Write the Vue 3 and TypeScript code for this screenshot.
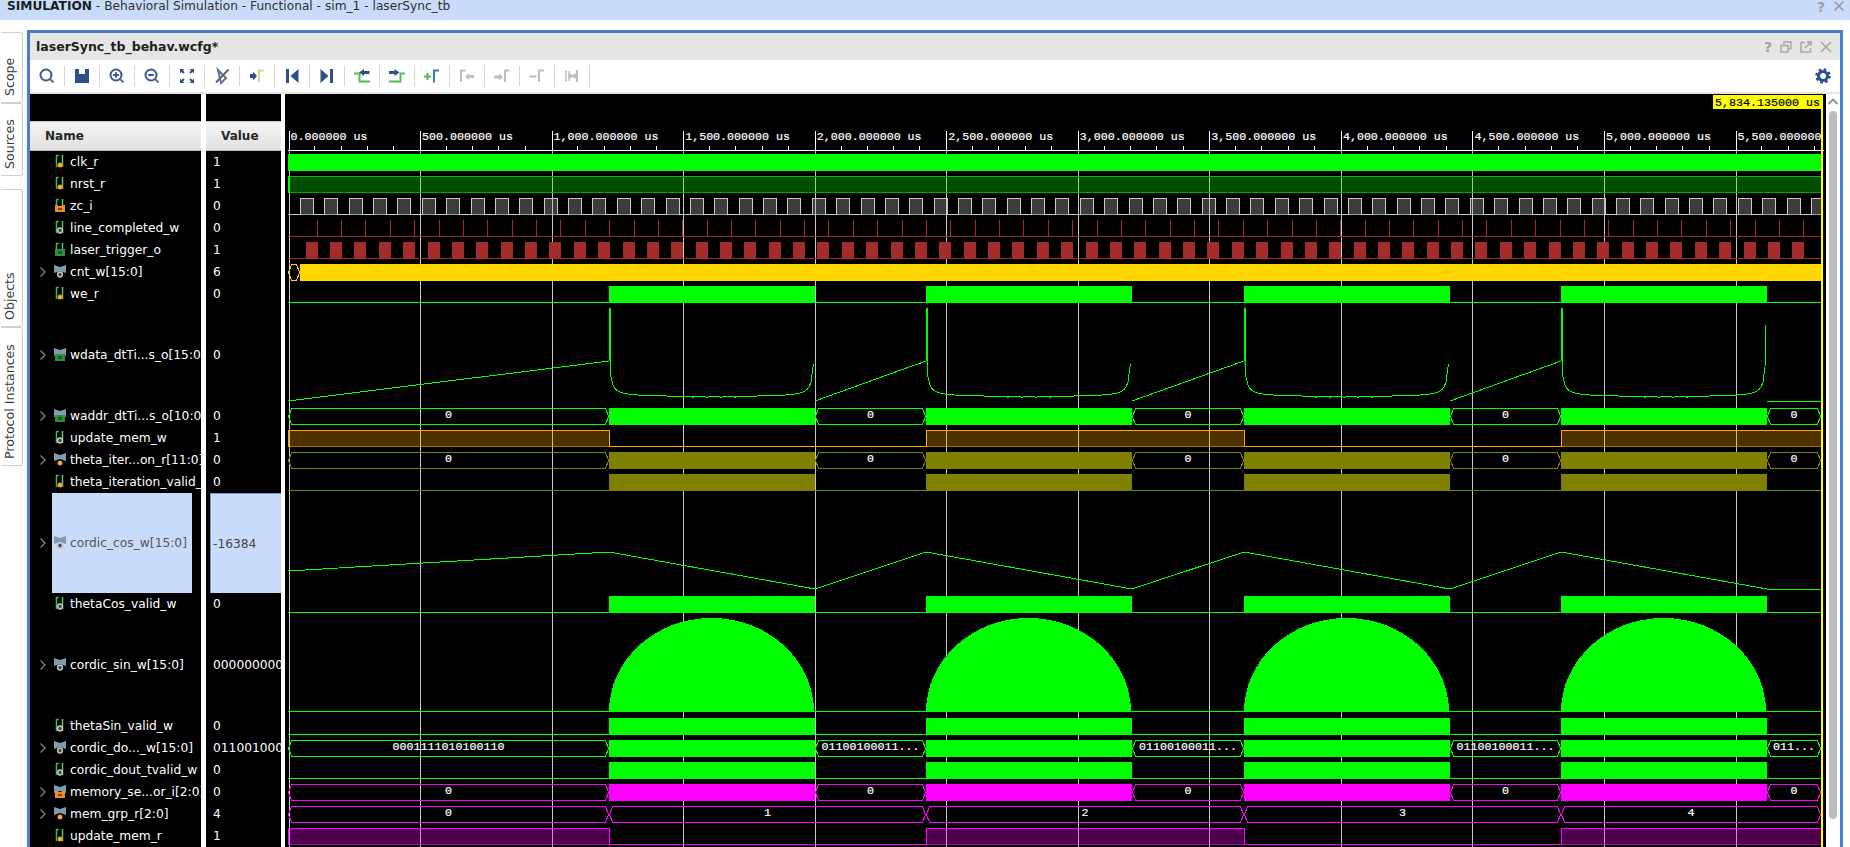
<script setup lang="ts">
type Row = {
  name: string;
  value: string;
  icon: "reg" | "in" | "wire" | "out";
  bus?: boolean;
  tall?: boolean;
  selected?: boolean;
};
type Shape = { d: string; fill?: string; stroke?: string; opacity?: number };
type Label = { x: number; y: number; text: string };

const rows: Row[] = [
  { name: "clk_r", value: "1", icon: "reg" },
  { name: "nrst_r", value: "1", icon: "reg" },
  { name: "zc_i", value: "0", icon: "in" },
  { name: "line_completed_w", value: "0", icon: "wire" },
  { name: "laser_trigger_o", value: "1", icon: "out" },
  { name: "cnt_w[15:0]", value: "6", icon: "wire", bus: true },
  { name: "we_r", value: "0", icon: "reg" },
  { name: "wdata_dtTi...s_o[15:0]", value: "0", icon: "out", bus: true, tall: true },
  { name: "waddr_dtTi...s_o[10:0]", value: "0", icon: "out", bus: true },
  { name: "update_mem_w", value: "1", icon: "wire" },
  { name: "theta_iter...on_r[11:0]", value: "0", icon: "reg", bus: true },
  { name: "theta_iteration_valid_w", value: "0", icon: "reg" },
  { name: "cordic_cos_w[15:0]", value: "-16384", icon: "wire", bus: true, tall: true, selected: true },
  { name: "thetaCos_valid_w", value: "0", icon: "wire" },
  { name: "cordic_sin_w[15:0]", value: "0000000000000000", icon: "wire", bus: true, tall: true },
  { name: "thetaSin_valid_w", value: "0", icon: "wire" },
  { name: "cordic_do..._w[15:0]", value: "0110010001100100", icon: "wire", bus: true },
  { name: "cordic_dout_tvalid_w", value: "0", icon: "wire" },
  { name: "memory_se...or_i[2:0]", value: "0", icon: "in", bus: true },
  { name: "mem_grp_r[2:0]", value: "4", icon: "reg", bus: true },
  { name: "update_mem_r", value: "1", icon: "reg" },
];

// wave area is drawn in page coordinates
const X0 = 288;
const X1 = 1821;
const MAJOR = 131.55;
const GREEN = "#00ff00";
const BRICK = "#a52a2a";
const OLIVE = "#808000";
const MAGENTA = "#ff00ff";
const ORANGE = "#ffa500";
const GOLD = "#ffd700";

const burst: [number, number][] = [
  [609, 815],
  [926, 1132],
  [1244, 1450],
  [1561, 1767],
];
const idle: [number, number][] = [
  [288, 609],
  [815, 926],
  [1132, 1244],
  [1450, 1561],
  [1767, 1821],
];
const toggled: [number, number][] = [
  [288, 609],
  [926, 1244],
  [1561, 1821],
];

const shapes: Shape[] = [];
const labels: Label[] = [];

function block(x0: number, x1: number, y0: number, y1: number) {
  return `M${x0} ${y0}H${x1}V${y1}H${x0}Z`;
}
function hex(x0: number, x1: number, t: number) {
  const top = t + 3.5;
  const bot = t + 19.5;
  const mid = t + 11.5;
  return `M${x0 + 0.5} ${mid}L${x0 + 3.5} ${top}H${x1 - 3.5}L${x1 - 0.5} ${mid}L${x1 - 3.5} ${bot}H${x0 + 3.5}Z`;
}
function valid(t: number, color: string) {
  shapes.push({ d: `M${X0} ${t + 19.5}H${X1}`, stroke: color });
  burst.forEach(([a, b]) => shapes.push({ d: block(a, b, t + 3, t + 20), fill: color }));
}
function busBursts(t: number, color: string, text: string[]) {
  burst.forEach(([a, b]) => shapes.push({ d: block(a, b, t + 3, t + 20), fill: color }));
  idle.forEach(([a, b], i) => {
    shapes.push({ d: hex(a, b, t), stroke: color });
    labels.push({ x: (a + b) / 2, y: t + 13, text: text[i] });
  });
}
function digital(t: number, highs: [number, number][], color: string, dim: number, fill = color) {
  const top = t + 3.5;
  const bot = t + 19.5;
  let d = `M${X0} ${bot}`;
  highs.forEach(([a, b]) => {
    shapes.push({ d: block(a, Math.min(b, X1), t + 3, t + 20), fill, opacity: 0.3 });
    shapes.push({ d: `M${a} ${bot}H${Math.min(b, X1)}`, stroke: color, opacity: dim });
    d += `M${a + 0.5} ${bot}V${top}H${Math.min(b, X1) + 0.5}`;
    d += b < X1 ? `V${bot}` : "";
  });
  shapes.push({ d, stroke: color });
  const lows: string[] = [];
  let from = X0;
  highs.forEach(([a, b]) => {
    if (a > from) lows.push(`M${from} ${bot}H${a}`);
    from = b;
  });
  if (from < X1) lows.push(`M${from} ${bot}H${X1}`);
  shapes.push({ d: lows.join(""), stroke: color });
}
function uShape(x0: number, x1: number, peak: number) {
  const floor = 397;
  const pts: string[] = [`M${x0} 361`, `L${x0} 308`, `L${x0 + 1} 308`, `L${x0 + 1} 364`];
  for (let x = x0 + 2; x <= x1; x += 2) {
    const d = Math.min(x - x0, x1 - x);
    let y = floor - 60 / (d + 1);
    if (d > 70 && x % 7 === 0) y += 1;
    pts.push(`L${x} ${y.toFixed(1)}`);
  }
  pts.push(`L${x1} ${peak}`);
  return pts.join("");
}

let top = 151;
const rowTops = rows.map((r) => {
  const t = top;
  top += r.tall ? 100 : 22;
  return t;
});

// each signal
shapes.push({ d: block(X0, X1, rowTops[0] + 3, rowTops[0] + 20), fill: GREEN });

digital(rowTops[1], [[X0, X1 + 1]], "#00c000", 0.8, GREEN);
shapes.push({ d: block(X0, X0 + 2, rowTops[1] + 3, rowTops[1] + 20), fill: GREEN });

const zcHighs: [number, number][] = [];
for (let k = 0; k < 63; k++) {
  const a = Math.round(300 + 24.37 * k);
  zcHighs.push([a, Math.min(a + 13, X1 + 1)]);
}
digital(rowTops[2], zcHighs, "#c8c8c8", 0.7);

shapes.push({ d: `M${X0} ${rowTops[3] + 19.5}H${X1}`, stroke: BRICK });
shapes.push({ d: `M${X0} ${rowTops[4] + 19.5}H${X1}`, stroke: BRICK });
for (let k = 0; k < 63; k++) {
  const e = Math.round(316.7 + 24.37 * k);
  if (e >= X1) break;
  shapes.push({ d: `M${e + 0.5} ${rowTops[3] + 3}V${rowTops[3] + 20}`, stroke: BRICK });
  shapes.push({ d: block(e - 11, Math.min(e + 1, X1), rowTops[4] + 3, rowTops[4] + 20), fill: BRICK });
}

shapes.push({ d: hex(X0, 300, rowTops[5]), stroke: GOLD });
shapes.push({ d: block(300, X1, rowTops[5] + 3, rowTops[5] + 20), fill: GOLD });

valid(rowTops[6], GREEN);

const ramp = `M288 401L609 361M815 401L926 361M1132 401L1244 361M1450 401L1561 361M1767 401H${X1}`;
shapes.push({
  d: ramp + uShape(609, 814, 364) + uShape(926, 1131, 364) + uShape(1244, 1449, 364) + uShape(1561, 1766, 325),
  stroke: GREEN,
});

const zeros = ["0", "0", "0", "0", "0"];
busBursts(rowTops[8], GREEN, zeros);
digital(rowTops[9], toggled, ORANGE, 0.55);
busBursts(rowTops[10], OLIVE, zeros);
valid(rowTops[11], OLIVE);

shapes.push({
  d: `M288 571L609 552L815 589L926 552L1132 589L1244 552L1450 589L1561 552L1767 589H${X1}`,
  stroke: GREEN,
});

valid(rowTops[13], GREEN);

shapes.push({ d: `M${X0} 711.5H${X1}`, stroke: GREEN });
burst.forEach(([a]) => {
  shapes.push({ d: `M${a} 712A102.5 94 0 0 1 ${a + 205} 712Z`, fill: GREEN });
});

valid(rowTops[15], GREEN);
busBursts(rowTops[16], GREEN, [
  "0001111010100110",
  "01100100011...",
  "01100100011...",
  "01100100011...",
  "011...",
]);
valid(rowTops[17], GREEN);
busBursts(rowTops[18], MAGENTA, zeros);

[
  [288, 609],
  [609, 926],
  [926, 1244],
  [1244, 1561],
  [1561, 1821],
].forEach(([a, b], i) => {
  shapes.push({ d: hex(a, b, rowTops[19]), stroke: MAGENTA });
  labels.push({ x: (a + b) / 2, y: rowTops[19] + 13, text: String(i) });
});
digital(rowTops[20], toggled, MAGENTA, 0.55);

// time ruler
const ruler = Array.from({ length: 12 }, (_, i) => {
  const us = i * 500;
  const txt = us >= 1000 ? `${Math.floor(us / 1000)},${String(us % 1000).padStart(3, "0")}` : String(us);
  return { x: X0 + 0.5 + i * MAJOR, text: `${txt}.000000 us` };
});
const minorTicks: number[] = [];
for (let i = 0; i < 12; i++) {
  for (let j = 1; j < 5; j++) {
    const x = Math.round(X0 + i * MAJOR + (j * MAJOR) / 5) + 0.5;
    if (x < X1) minorTicks.push(x);
  }
}

const NAVY = "#2f4f8a";
const LOUPE = "#3a5a90";
const GRAY = "#bdbdbd";
const LEAF = "#4cc04c";
const tools: Shape[][] = [
  [
    { d: "M9 3.5a5.5 5.5 0 1 0 0 11a5.5 5.5 0 1 0 0-11z", stroke: LOUPE },
    { d: "M13 13l3.5 3.5", stroke: "#5f6f8a" },
  ],
  [{ d: "M3 3h4v5h6V3h4v14H3z", fill: NAVY }],
  [
    { d: "M9 3.5a5.5 5.5 0 1 0 0 11a5.5 5.5 0 1 0 0-11z", stroke: LOUPE },
    { d: "M13 13l3.5 3.5", stroke: "#5f6f8a" },
    { d: "M6.2 9h5.6M9 6.2v5.6", stroke: LOUPE },
  ],
  [
    { d: "M9 3.5a5.5 5.5 0 1 0 0 11a5.5 5.5 0 1 0 0-11z", stroke: LOUPE },
    { d: "M13 13l3.5 3.5", stroke: "#5f6f8a" },
    { d: "M6.2 9h5.6", stroke: LOUPE },
  ],
  [
    { d: "M3 3h4.5L3 7.5zM17 3h-4.5L17 7.5zM3 17h4.5L3 12.5zM17 17h-4.5L17 12.5z", fill: NAVY },
    { d: "M5 5l2 2M15 5l-2 2M5 15l2-2M15 15l-2-2", stroke: NAVY },
  ],
  [
    { d: "M6 4l8 8-5 5z", stroke: "#5f7397" },
    { d: "M4 16.5L16.5 3.5", stroke: "#666" },
  ],
  [
    { d: "M3 8h3V5.5L10 10l-4 4.5V12H3z", fill: NAVY },
    { d: "M12 16V4.5h4.5", stroke: "#e6d27a" },
  ],
  [{ d: "M4 3h3v14H4zM16.5 3v14L8.5 10z", fill: NAVY }],
  [{ d: "M16 3h-3v14h3zM3.5 3v14L11.500 10z", fill: NAVY }],
  [
    { d: "M2 7.500h5.500v8H18", stroke: LEAF },
    { d: "M7 6.500l5-3.500v2h5.500v3H12v2z", fill: NAVY },
  ],
  [
    { d: "M2 15.500h11.500v-8H18", stroke: LEAF },
    { d: "M2 5h5.500V3l5 3.500-5 3.500V8H2z", fill: NAVY },
  ],
  [
    { d: "M2 10.500h7M5.500 7v7", stroke: LEAF },
    { d: "M12 16.500V4.500h5", stroke: "#2f7fb5" },
  ],
  [
    { d: "M4 16V4.500h4.500", stroke: GRAY },
    { d: "M8 10.500l4-3.500v2h5v3h-5v2z", fill: GRAY },
  ],
  [
    { d: "M2 9.500h5V7.500l4 3.500-4 3.500v-2H2z", fill: GRAY },
    { d: "M13 16V4.500h4.500", stroke: GRAY },
  ],
  [{ d: "M2.500 10.500h7M12 16V4.500h5", stroke: GRAY }],
  [
    { d: "M4 4v12M7 5v10", stroke: "#cfcfcf" },
    { d: "M15 4v12", stroke: GRAY },
    { d: "M7 10h7M9 8l-2 2 2 2M12 8l2 2-2 2", stroke: GRAY },
  ],
];
</script>

<template>
  <div class="screen">
    <header class="sim-bar">
      <span class="sim-title"><b>SIMULATION</b> - Behavioral Simulation - Functional - sim_1 - laserSync_tb</span>
      <span class="sim-actions">
        <span class="help">?</span>
        <svg width="12" height="12" viewBox="0 0 12 12"><path d="M1.500 1.500l9 9M10.500 1.500l-9 9" stroke="#9a9a9a" stroke-width="1.600" fill="none" /></svg>
      </span>
    </header>

    <div class="workspace">
      <nav class="side-tabs">
        <div class="tab tab-scope"><span>Scope</span></div>
        <div class="tab tab-sources"><span>Sources</span></div>
        <div class="tab tab-objects"><span>Objects</span></div>
        <div class="tab tab-protocol"><span>Protocol Instances</span></div>
      </nav>

      <section class="panel">
        <div class="panel-title">
          <span class="file">laserSync_tb_behav.wcfg*</span>
          <span class="panel-actions">
            <span class="help">?</span>
            <svg width="12" height="12" viewBox="0 0 12 12" fill="none" stroke="#a8a8a8" stroke-width="1.500">
              <path d="M4 3.500V1h7v6.500H8.500" /><path d="M1 4.500h7v6.500H1z" />
            </svg>
            <svg width="12" height="12" viewBox="0 0 12 12" fill="none" stroke="#a8a8a8" stroke-width="1.500">
              <path d="M5 1.500H1v9.500h9.500V7" /><path d="M5 7l6-6M7 1h4v4" />
            </svg>
            <svg width="12" height="12" viewBox="0 0 12 12" fill="none" stroke="#a8a8a8" stroke-width="1.700">
              <path d="M1 1l10 10M11 1L1 11" />
            </svg>
          </span>
        </div>

        <div class="toolbar">
          <div v-for="(tool, i) in tools" :key="i" class="tool">
            <svg width="20" height="20" viewBox="0 0 20 20">
              <path
                v-for="(part, j) in tool"
                :key="j"
                :d="part.d"
                :fill="part.fill ?? 'none'"
                :stroke="part.stroke ?? 'none'"
                stroke-width="2"
              />
            </svg>
          </div>
          <svg class="gear" width="16" height="16" viewBox="0 0 16 16">
            <circle cx="8" cy="8" r="4.500" fill="none" stroke="#2f4f8a" stroke-width="3" />
            <circle cx="8" cy="8" r="6.500" fill="none" stroke="#2f4f8a" stroke-width="2.500" stroke-dasharray="2.550 2.550" />
          </svg>
        </div>

        <div class="viewer">
          <div class="col col-name">
            <div class="col-head">Name</div>
            <div v-for="row in rows" :key="row.name" class="sig-row" :class="{ tall: row.tall }">
              <svg v-if="row.bus" class="chevron" width="8" height="12" viewBox="0 0 8 12">
                <path d="M1.500 1.500L6 6l-4.500 4.500" fill="none" stroke="#8a8a8a" stroke-width="1.200" />
              </svg>
              <div class="sig" :class="{ picked: row.selected }">
                <svg class="sig-icon" width="14" height="16" viewBox="0 0 14 16">
                  <path v-if="row.bus" d="M1 1l6 2 6-2v8l-6-2-6 2z" fill="#7f9bb0" />
                  <template v-else>
                    <path d="M3.500 13V1" stroke="#2fc24a" stroke-width="1.500" fill="none" />
                    <path d="M3.500 1.500h2M9.500 13V1" stroke="#5fbf70" stroke-width="1.500" fill="none" />
                  </template>
                  <circle v-if="row.icon === 'reg'" cx="7" cy="11" r="2.500" fill="#f5972a" />
                  <circle v-if="row.icon === 'reg'" cx="7" cy="11" r="0.800" fill="#ffd9a0" />
                  <circle v-if="row.icon === 'wire'" cx="7" cy="10.500" r="2.400" fill="#444" stroke="#c4c4c4" stroke-width="1.500" />
                  <path v-if="row.icon === 'in'" d="M2 7h3v1h4V7h3v7H2z" fill="#f08a24" />
                  <path v-if="row.icon === 'in'" d="M5 10h4v2H5z" fill="#7a4410" />
                  <path v-if="row.icon === 'out'" d="M2 7h10v7H2z" fill="#2f8f3f" />
                  <path v-if="row.icon === 'out'" d="M5 9h4v3H5z" fill="#1c5a28" />
                </svg>
                <span class="sig-name">{{ row.name }}</span>
              </div>
            </div>
          </div>

          <div class="col col-value">
            <div class="col-head">Value</div>
            <div v-for="row in rows" :key="row.name" class="val-row" :class="{ tall: row.tall, picked: row.selected }">
              <span>{{ row.value }}</span>
            </div>
          </div>

          <svg class="wave" width="1541" height="753" viewBox="285 94 1541 753" shape-rendering="crispEdges">
            <defs>
              <clipPath id="ruler-clip"><rect x="285" y="94" width="1536" height="60" /></clipPath>
            </defs>

            <path
              v-for="r in ruler"
              :key="r.x"
              :d="`M${Math.round(r.x) + 0.5} 150V847`"
              stroke="#c4c4c4"
              fill="none"
            />
            <path
              v-for="(s, i) in shapes"
              :key="i"
              :d="s.d"
              :fill="s.fill ?? 'none'"
              :stroke="s.stroke ?? 'none'"
              :fill-opacity="s.fill ? s.opacity ?? 1 : undefined"
              :stroke-opacity="s.stroke ? s.opacity ?? 1 : undefined"
            />

            <path :d="`M${X0} 150.500H1824`" stroke="#ffffff" />
            <path
              v-for="r in ruler"
              :key="'t' + r.x"
              :d="`M${Math.round(r.x) + 0.5} 131V150`"
              stroke="#ffffff"
            />
            <path v-for="x in minorTicks" :key="x" :d="`M${x} 146V150`" stroke="#ffffff" />
            <g clip-path="url(#ruler-clip)" class="mono ruler-text">
              <text v-for="r in ruler" :key="'l' + r.x" :x="r.x + 2" y="140">{{ r.text }}</text>
            </g>

            <g class="mono bus-text">
              <text v-for="(l, i) in labels" :key="i" :x="l.x" :y="l.y" text-anchor="middle">{{ l.text }}</text>
            </g>

            <rect x="1821" y="109" width="2" height="738" fill="#ffff00" />
            <rect x="1713" y="95" width="110" height="14" fill="#ffff00" />
            <text class="mono cursor-text" x="1715" y="105.500">5,834.135000 us</text>
          </svg>

          <div class="scroll">
            <svg width="12" height="8" viewBox="0 0 12 8">
              <path d="M1.500 6L6 1.500 10.500 6" fill="none" stroke="#8f8f8f" stroke-width="1.800" />
            </svg>
            <div class="thumb"></div>
          </div>
        </div>
      </section>
    </div>
  </div>
</template>

<style scoped>
.screen {
  width: 1850px;
  height: 847px;
  overflow: hidden;
  background: #fff;
  font-family: "DejaVu Sans", sans-serif;
}

.sim-bar {
  height: 20px;
  background: #c9dcfb;
  display: flex;
  justify-content: space-between;
  overflow: hidden;
  padding: 0 5px 0 7px;
  color: #303030;
  font-size: 12.2px;
  line-height: 12px;
}
.sim-title b {
  color: #1c1c1c;
}
.sim-actions {
  display: flex;
  gap: 8px;
  align-items: flex-start;
}
.help {
  color: #a0a0a0;
  font-weight: bold;
  font-size: 14px;
  line-height: 14px;
}

.workspace {
  display: flex;
  height: 827px;
  padding-top: 10px;
}

.side-tabs {
  width: 27px;
  box-sizing: border-box;
  padding: 2px 0 0 1px;
  flex: none;
}
.tab {
  width: 22px;
  box-sizing: border-box;
  border: 1px solid #cfcfcf;
  border-right: none;
  border-radius: 3px 0 0 3px;
  display: flex;
  justify-content: flex-start;
  color: #3a3a3a;
  font-size: 12.600px;
  writing-mode: vertical-rl;
  transform: rotate(180deg);
  padding: 6px 2px 0 0;
  line-height: 14px;
}
.tab-scope {
  height: 71px;
}
.tab-sources {
  height: 73px;
  margin-bottom: 13px;
}
.tab-objects {
  height: 138px;
}
.tab-protocol {
  height: 139px;
}

.panel {
  width: 1816px;
  box-sizing: border-box;
  border: 3px solid #4a7cc9;
  border-bottom: none;
  display: flex;
  flex-direction: column;
  flex: none;
}

.panel-title {
  height: 27px;
  background: #e6e6e6;
  display: flex;
  align-items: center;
  justify-content: space-between;
  padding: 0 8px 0 6px;
}
.file {
  font-size: 12.500px;
  font-weight: bold;
  color: #202020;
}
.panel-actions {
  display: flex;
  align-items: center;
  gap: 8px;
}

.toolbar {
  height: 32px;
  background: #fff;
  display: flex;
  align-items: center;
  border-bottom: 2px solid #e6e6e6;
  box-sizing: content-box;
}
.tool {
  width: 35px;
  height: 20px;
  box-sizing: border-box;
  border-right: 1px solid #d6d6d6;
  display: flex;
  justify-content: center;
}
.gear {
  margin-left: auto;
  margin-right: 9px;
}

.viewer {
  flex: 1;
  min-height: 0;
  display: flex;
  background: #fff;
}

.col {
  background: #000;
  padding-top: 27px;
  flex: none;
}
.col-name {
  width: 171px;
  margin-right: 5px;
}
.col-value {
  width: 75px;
  margin-right: 4px;
}
.col-head {
  height: 30px;
  box-sizing: border-box;
  padding-left: 15px;
  display: flex;
  align-items: center;
  background: linear-gradient(#f4f4f4, #e2e2e2);
  border-top: 1px solid #cfcfcf;
  border-bottom: 1px solid #bdbdbd;
  color: #262626;
  font-size: 12px;
  font-weight: bold;
}

.sig-row,
.val-row {
  height: 22px;
  display: flex;
  align-items: center;
  position: relative;
  overflow: hidden;
  color: #fff;
  font-size: 12.250px;
  white-space: nowrap;
}
.sig-row.tall,
.val-row.tall {
  height: 100px;
}
.chevron {
  position: absolute;
  left: 9px;
}
.sig {
  margin-left: 22px;
  min-width: 140px;
  height: 100%;
  display: flex;
  align-items: center;
  flex: none;
}
.sig.picked {
  background: #c9dcfb;
  color: #555;
}
.sig-icon {
  margin: -1px 3px 0 1px;
  flex: none;
}
.val-row span {
  padding-left: 7px;
}
.val-row.picked {
  margin-left: 4px;
  background: #c9dcfb;
  color: #444;
  box-sizing: border-box;
  border-top: 1px solid #6a9bd8;
  border-left: 1px solid #6a9bd8;
}
.val-row.picked span {
  padding-left: 2px;
}

.wave {
  display: block;
  flex: none;
  background: #000;
}
.mono {
  font-family: "Liberation Mono", monospace;
  font-size: 11.67px;
}
.ruler-text,
.bus-text {
  fill: #fff;
  stroke: #fff;
  stroke-width: 0.2px;
}
.cursor-text {
  fill: #000;
  stroke: #000;
  stroke-width: 0.2px;
}

.scroll {
  width: 14px;
  flex: none;
  display: flex;
  flex-direction: column;
  align-items: center;
  padding-top: 4px;
}
.thumb {
  width: 8px;
  height: 708px;
  margin-top: 5px;
  background: #bdbdbd;
  border-radius: 4px;
}
</style>

<style>
html,
body {
  margin: 0;
  background: #fff;
  overflow: hidden;
}
</style>
